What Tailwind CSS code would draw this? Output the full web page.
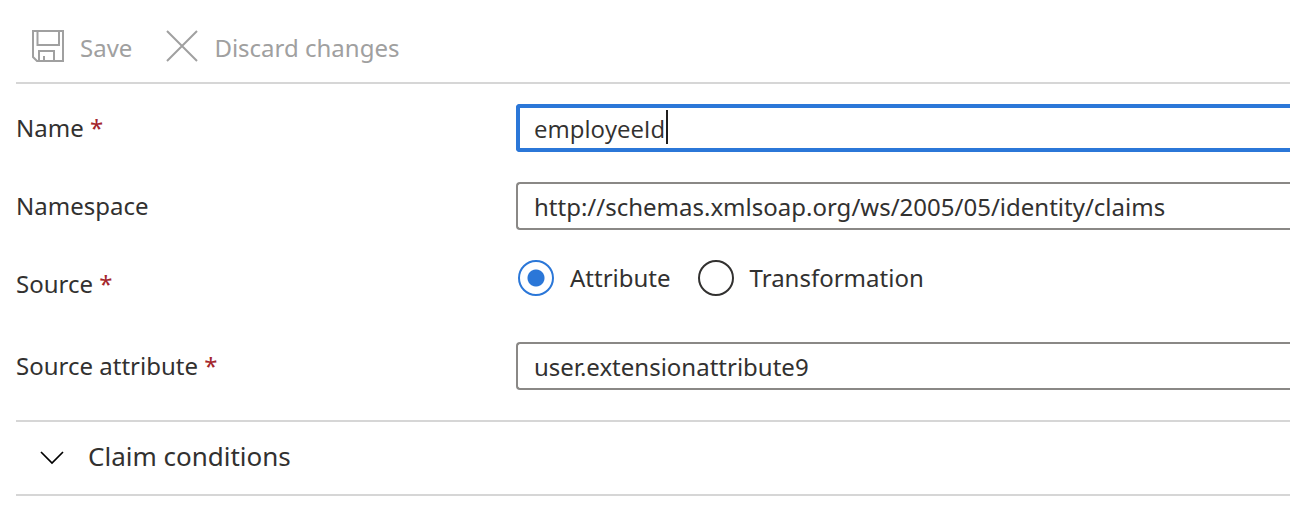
<!DOCTYPE html>
<html lang="en">
<head>
<meta charset="utf-8">
<meta name="viewport" content="width=device-width, initial-scale=1">
<title>Manage claim</title>
<script src="https://cdn.jsdelivr.net/npm/@tailwindcss/browser@4"></script>
</head>
<body class="bg-white pl-4 font-['Noto_Sans','Open_Sans',sans-serif] text-[24px] leading-9 text-[#323130]">
<div role="toolbar" aria-label="Claim actions" class="flex items-center gap-[34px] border-b-2 border-[#d6d6d6] pt-7 pb-4 pl-4 text-[#a0a0a0]">
  <button type="button" disabled class="flex items-start gap-4">
    <svg class="mt-[2px] size-8 shrink-0" viewBox="0 0 32 32" fill="none" stroke="#a0a0a0" stroke-width="2" aria-hidden="true"><path d="M1 1H31V31H5L1 27Z M5.500 1V15H27V1 M7 31V21H22V31 M12 31V26"/></svg>
    <span class="pt-[2px]">Save</span>
  </button>
  <button type="button" disabled class="flex items-start gap-4">
    <svg class="mt-[2px] size-8 shrink-0" viewBox="0 0 32 32" fill="none" stroke="#a0a0a0" stroke-width="2" aria-hidden="true"><path d="M1 1L31 31M31 1L1 31"/></svg>
    <span class="pt-[2px]">Discard changes</span>
  </button>
</div>
<form class="grid grid-cols-[500px_1fr] items-center gap-y-[30px] pt-5 pb-[30px]">
  <label for="name">Name <span class="text-[#a4262c]">*</span></label>
  <div class="relative">
    <input id="name" type="text" value="employeeId" required class="h-12 w-full rounded-l border-4 border-r-0 border-[#2b77d8] pl-[14px] font-['Open_Sans',sans-serif] caret-transparent outline-none">
    <span class="absolute top-[6px] left-[150px] h-[34px] w-[2px] bg-[#201f1e]" aria-hidden="true"></span>
  </div>
  <label for="namespace">Namespace</label>
  <input id="namespace" type="text" value="http://schemas.xmlsoap.org/ws/2005/05/identity/claims" class="h-12 w-full rounded-l border-2 border-r-0 border-[#8a8886] pl-4 outline-none">
  <div id="source-label" class="pb-1">Source <span class="text-[#a4262c]">*</span></div>
  <div role="radiogroup" aria-labelledby="source-label" class="mb-4 flex h-9 items-center gap-[27px] pl-[2px]">
    <label class="flex items-center gap-4"><input type="radio" name="source" checked class="size-9 appearance-none rounded-full border-2 border-[#323130] checked:border-[#2b77d8] checked:bg-[radial-gradient(circle,#2b77d8_8px,transparent_9px)]">Attribute</label>
    <label class="flex items-center gap-4"><input type="radio" name="source" class="size-9 appearance-none rounded-full border-2 border-[#323130] checked:border-[#2b77d8] checked:bg-[radial-gradient(circle,#2b77d8_8px,transparent_9px)]">Transformation</label>
  </div>
  <label for="attribute">Source attribute <span class="text-[#a4262c]">*</span></label>
  <input id="attribute" type="text" value="user.extensionattribute9" required class="h-12 w-full rounded-l border-2 border-r-0 border-[#8a8886] pl-4 outline-none">
</form>
<section class="border-y-2 border-[#d6d6d6]">
  <button type="button" aria-expanded="false" class="flex h-[72px] w-full items-center gap-6 pl-6 text-left text-[26px]">
    <svg class="h-[14px] w-6 shrink-0" viewBox="0 0 24 14" fill="none" stroke="#000" stroke-width="1.700" aria-hidden="true"><path d="M1 1L12 12L23 1"/></svg>
    <span class="pb-1">Claim conditions</span>
  </button>
</section>
</body>
</html>
